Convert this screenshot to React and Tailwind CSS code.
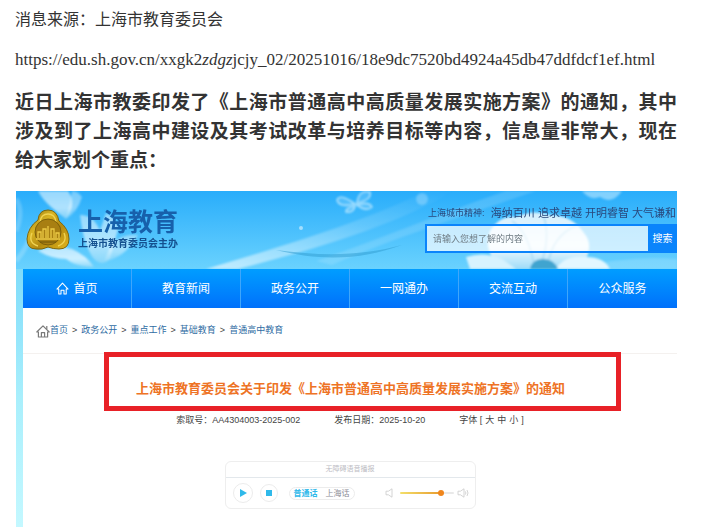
import React, { useState } from 'react';

const navItems = ['教育新闻', '政务公开', '一网通办', '交流互动', '公众服务'];
const crumbs = ['首页', '政务公开', '重点工作', '基础教育', '普通高中教育'];

const HouseIcon = ({ className }) => (
  <svg viewBox="0 0 14 14" className={className} fill="none" stroke="currentColor" strokeWidth="1.1" strokeLinejoin="round" aria-hidden="true">
    <path d="M1 7.6 7 1.2l6 6.4H11V13H8.6V8.8H5.4V13H3V7.6z" />
  </svg>
);

const CrumbHouse = () => (
  <svg viewBox="0 0 14 14" className="w-[14px] h-[14px]" fill="none" stroke="#7a7a7a" strokeWidth="1.2" strokeLinejoin="round" aria-hidden="true">
    <path d="M.8 8 7 1.8 13.2 8H11.6v5H2.4V8z" />
    <path d="M5.4 13V8.6h3.2V13M10.8 2v3" />
  </svg>
);

const BannerArt = () => (
  <svg viewBox="0 0 661 78" preserveAspectRatio="xMidYMid slice" className="absolute inset-0 w-full h-full" aria-hidden="true">
    <defs>
      <linearGradient id="sky" x1="0" y1="0" x2="0" y2="1">
        <stop offset="0" stopColor="#29adfb" />
        <stop offset="1" stopColor="#6ad2fe" />
      </linearGradient>
      <linearGradient id="beam" x1="0" y1="1" x2="1" y2="0">
        <stop offset="0" stopColor="#fff" stopOpacity=".6" />
        <stop offset=".6" stopColor="#fff" stopOpacity=".15" />
        <stop offset="1" stopColor="#fff" stopOpacity="0" />
      </linearGradient>
      <linearGradient id="petal" x1="0" y1="0" x2="0" y2="1">
        <stop offset="0" stopColor="#d3effd" />
        <stop offset=".6" stopColor="#f1fbff" />
        <stop offset="1" stopColor="#9fdcf8" />
      </linearGradient>
      <filter id="soft" x="-10%" y="-10%" width="120%" height="120%">
        <feGaussianBlur stdDeviation="1" />
      </filter>
    </defs>
    <rect width="661" height="78" fill="url(#sky)" />
    <g filter="url(#soft)">
      <path d="M190 78C270 54 350 30 410 0h28C380 34 300 58 222 78z" fill="url(#beam)" />
      <path d="M300 70C370 46 430 20 490 0h30C450 24 370 50 316 74z" fill="#fff" opacity=".14" />
      <path d="M0 40Q8 20 0 8M0 70q14-16 16-34" stroke="#fff" strokeWidth="5" fill="none" opacity=".2" />
      <path d="M560 78q50-14 101-10v10z" fill="#fff" opacity=".15" />
    </g>
    <path d="M260 59c50 7 90 5 126-5-38 14-78 17-126 5z" fill="#2f9bd0" opacity=".5" />

    {/* 左侧莲花 */}
    <g fill="url(#petal)" filter="url(#soft)">
      <path d="M22 0C28 12 40 20 50 28 58 18 58 8 52 0z" opacity=".65" />
      <path d="M50 28Q62 20 66 6q-4-6-10-6-2 14-6 28z" opacity=".45" />
      <path d="M64 24q14 0 20 16l6-18q10 4 12 16l-8 30q-8 8-16 0-10-12-14-44z" opacity=".6" />
      <path d="M88 70q20-2 34-26-14-2-26 8z" opacity=".5" />
      <path d="M22 60q16-8 34-2 14 6 22 18-18 0-28-8-14 0-28-8z" opacity=".75" />
    </g>

    {/* 蝴蝶 */}
    <g fill="#fff" fillOpacity=".15" stroke="#d7f2ff" strokeOpacity=".7" strokeWidth="1.6" filter="url(#soft)">
      <path d="M339 13Q324 2 321 9q2 8 18 4z" />
      <path d="M341 12q2-14 13-11 2 8-13 11z" />
      <path d="M341 14q12-4 15 2-6 5-15-2z" />
      <path d="M339 15q-10 2-9 6 8 1 9-6z" />
    </g>
    <circle cx="406" cy="8" r="6" fill="#fff" opacity=".25" filter="url(#soft)" />
    <circle cx="285" cy="37" r="2" fill="#fff" opacity=".5" />

    {/* 右侧莲花 */}
    <g filter="url(#soft)">
      <path d="M566 0q8 10 18 6 12 8 22-6z" fill="#d9f3ff" opacity=".5" />
      <path d="M474 40q10-16 26-14 18-8 34-2 22 0 34 18 12 14-4 36H486q-20-18-12-38z" fill="url(#petal)" />
      <path d="M496 30q16 10 22 44M562 34q-26 10-30 40M528 26q6 20-2 44" stroke="#a6d9f2" strokeWidth="1.4" fill="none" />
      <path d="M450 66q18-6 36 2l14 10h-46z" fill="#d8f3fe" />
      <path d="M540 78q8-14 30-12 18 0 24 12z" fill="#e3f7ff" />
      <path d="M514 78q2-10 13-10t15 10z" fill="#3fa4cf" />
    </g>
  </svg>
);

const Emblem = () => (
  <svg viewBox="0 0 44 42" className="w-11 h-[42px] shrink-0" aria-hidden="true">
    <defs>
      <linearGradient id="gold" x1="0" y1="0" x2="1" y2="1">
        <stop offset="0" stopColor="#8f7410" />
        <stop offset=".35" stopColor="#d9b423" />
        <stop offset=".6" stopColor="#b38a10" />
        <stop offset="1" stopColor="#e3b61c" />
      </linearGradient>
    </defs>
    <path d="M12 11Q13 1 22 1t11 11q10 8 10 18 0 10-10 10-6 0-11-2-6 3-12 2Q1 40 1 30 2 18 12 11z" fill="url(#gold)" stroke="#7d650c" />
    <path d="M14 13Q15 5 22 5t8 8M6 24q-4 10 6 13M38 24q4 9-6 13" fill="none" stroke="#f0d352" strokeWidth="1.4" />
    <circle cx="22" cy="23" r="13" fill="#a87f12" stroke="#6f5609" strokeWidth=".8" />
    <path d="M12 29v-6h3v6M17 29v-9h3v9M22 29V17M25 29v-9h3v9M30 29v-5h3v5M10 30h24" fill="none" stroke="#ecca45" strokeWidth="1.3" />
    <path d="M14 33h16" stroke="#6f5609" />
  </svg>
);

const Speaker = ({ waves }) => (
  <svg viewBox="0 0 12 10" className="w-3 h-[10px] shrink-0" fill="none" stroke="#cfcfcf" strokeWidth=".9" aria-hidden="true">
    <path d="M1 3.2h2.4L7 .8v8.4L3.4 6.8H1z" />
    {waves && <path d="M8.4 3.4q1 1.6 0 3.2M10 2q2 3 0 6" />}
  </svg>
);

const SiteHeader = () => (
  <header className="relative h-[78px] overflow-hidden flex justify-between pl-[10px]">
    <BannerArt />
    <div className="relative flex items-center gap-2">
      <Emblem />
      <div className="flex flex-col text-[#1760ab] font-bold">
        <span className="text-[25px] leading-7">上海教育</span>
        <span className="text-[10px] leading-4 text-[#14508f]">上海市教育委员会主办</span>
      </div>
    </div>
    <div className="relative flex flex-col pt-[14px] w-[252px]">
      <p className="flex items-center justify-between text-[#29487c] leading-4 whitespace-nowrap pl-[3px] pr-px">
        <span className="text-[9px]">上海城市精神:</span>
        <span className="text-[11px]">海纳百川 追求卓越 开明睿智 大气谦和</span>
      </p>
      <form className="mt-[3px] flex h-[29px] border-2 border-r-0 border-[#0a84fb]" onSubmit={(e) => e.preventDefault()}>
        <input
          type="search"
          aria-label="站内搜索"
          placeholder="请输入您想了解的内容"
          className="flex-1 min-w-0 px-[6px] pt-[3px] text-[9px] bg-white/70 placeholder:text-[#6f7c84] outline-none"
        />
        <button type="submit" className="w-[29px] text-[10px] text-white bg-[#0a84fb]">搜索</button>
      </form>
    </div>
  </header>
);

const SiteNav = () => (
  <nav className="grid grid-cols-6 h-[39px] bg-linear-to-b from-[#009dff] to-[#0070fb] text-white text-[12px] divide-x divide-[#3fa6fb]">
    <a href="#home" className="flex items-center justify-center gap-1">
      <HouseIcon className="w-[13px] h-[13px]" />
      首页
    </a>
    {navItems.map((item) => (
      <a key={item} href="#nav" className="flex items-center justify-center">{item}</a>
    ))}
  </nav>
);

const AudioPlayer = () => {
  const [volume, setVolume] = useState(80);
  const [dialect, setDialect] = useState('普通话');

  return (
    <section className="mx-auto w-[251px] border border-[#eeeeee] rounded-md" aria-label="语音播报">
      <h3 className="h-4 flex items-center justify-center text-[7px] text-[#bdbdc4] border-b border-[#e3e8ec]">无障碍语音播报</h3>
      <div className="h-[30px] flex items-center pl-[7px] pr-[6px]">
        <button aria-label="播放" className="w-5 h-5 rounded-full border border-[#ececec] flex items-center justify-center">
          <svg viewBox="0 0 8 8" className="w-2 h-2" fill="#2fb9ea"><path d="M1 0l7 4-7 4z" /></svg>
        </button>
        <button aria-label="停止" className="ml-[7px] w-[18px] h-[18px] rounded-full border border-[#ececec] flex items-center justify-center">
          <svg viewBox="0 0 6 6" className="w-[6px] h-[6px]" fill="#2fb9ea"><path d="M0 0h6v6H0z" /></svg>
        </button>
        <div className="ml-[11px] flex items-center h-[13px] border border-[#ececec] rounded-full text-[8px] leading-[11px]">
          {['普通话', '上海话'].map((name) => (
            <button
              key={name}
              onClick={() => setDialect(name)}
              className={`px-1 ${dialect === name ? 'text-[#2fb9ea] font-bold' : 'text-[#8b8b95]'}`}
            >
              {name}
            </button>
          ))}
        </div>
        <div className="ml-auto flex items-center gap-[3px]">
          <Speaker />
          <input
            type="range"
            min="0"
            max="100"
            aria-label="音量"
            value={volume}
            onChange={(e) => setVolume(Number(e.target.value))}
            className="w-[54px] h-[2px] appearance-none rounded-full bg-[linear-gradient(to_right,#f3df6a,#e79a2e_78%,#e9e9e9_78%)] [&::-webkit-slider-thumb]:appearance-none [&::-webkit-slider-thumb]:w-[6px] [&::-webkit-slider-thumb]:h-[6px] [&::-webkit-slider-thumb]:rounded-full [&::-webkit-slider-thumb]:bg-[#f0861c]"
          />
          <Speaker waves />
        </div>
      </div>
    </section>
  );
};

const Notice = () => (
  <div className="bg-white min-h-[219px] pb-5">
    <nav className="h-[46px] flex items-center gap-1 pl-[13px] text-[9px] text-[#2f6ca3] border-b border-[#f4f1ef]" aria-label="面包屑">
      <span className="-mr-1"><CrumbHouse /></span>
      {crumbs.map((name, i) => (
        <React.Fragment key={name}>
          {i > 0 && <span className="text-[#444444]">&gt;</span>}
          <a href="#crumb">{name}</a>
        </React.Fragment>
      ))}
    </nav>
    <div className="-mt-[2px] ml-[81px] mr-[56px] h-[59px] border-5 border-[#e82127] pt-[14px] pr-6 flex items-center justify-center">
      <h2 className="text-[13px] leading-5 font-bold text-[#ee7325] whitespace-nowrap">上海市教育委员会关于印发《上海市普通高中高质量发展实施方案》的通知</h2>
    </div>
    <div className="mt-[1px] flex justify-center gap-[34px] text-[9px] leading-4 text-[#444444]">
      <span>索取号：AA4304003-2025-002</span>
      <span>发布日期：2025-10-20</span>
      <span className="flex gap-[3px]">
        字体 [
        <button>大</button>
        <button>中</button>
        <button>小</button>
        ]
      </span>
    </div>
    <div className="mt-[33px]">
      <AudioPlayer />
    </div>
  </div>
);

export default function App() {
  return (
    <main className="pl-[15px] pr-[39px] pt-2 bg-white text-[#333333] font-['Liberation_Sans','Noto_Sans_CJK_SC',sans-serif]">
      <p className="text-[16px] leading-6">消息来源：上海市教育委员会</p>
      <p className="mt-4 text-[17px] leading-6 font-['Liberation_Serif',serif]">
        https://edu.sh.gov.cn/xxgk2<em>zdgz</em>jcjy_02/20251016/18e9dc7520bd4924a45db47ddfdcf1ef.html
      </p>
      <p className="mt-4 text-[19px] leading-[29px] font-bold text-justify">
        近日上海市教委印发了《上海市普通高中高质量发展实施方案》的通知，其中涉及到了上海高中建设及其考试改革与培养目标等内容，信息量非常大，现在给大家划个重点：
      </p>
      <div className="mt-4 ml-px">
        <SiteHeader />
        <div className="pl-[7px] bg-linear-to-b from-[#7fdcfa] via-[#a9effc] to-[#c4f8ff]">
          <SiteNav />
          <Notice />
        </div>
      </div>
    </main>
  );
}
